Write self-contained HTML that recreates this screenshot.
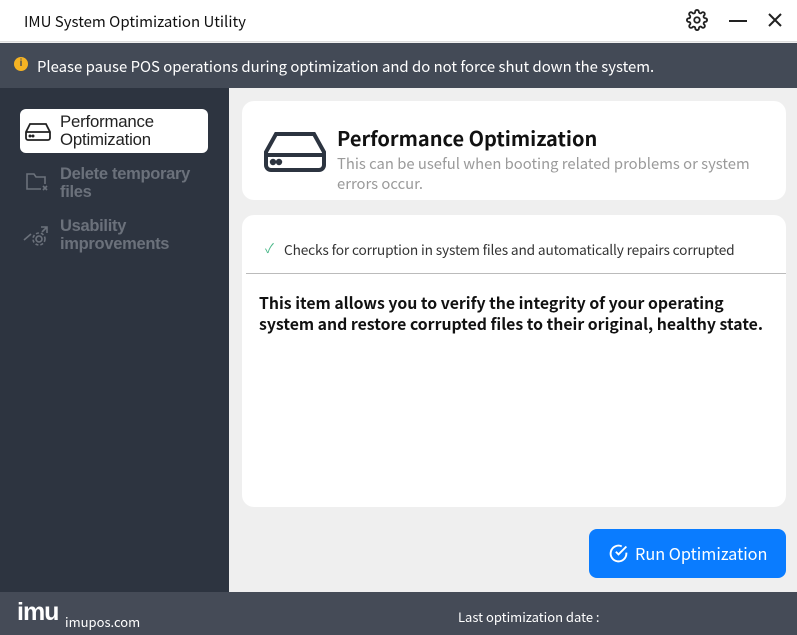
<!DOCTYPE html>
<html><head><meta charset="utf-8"><style>
*{margin:0;padding:0;box-sizing:border-box}
body{width:797px;height:635px;overflow:hidden;font-family:"Liberation Sans","Noto Sans CJK KR",sans-serif;background:#efefef;position:relative}
.abs{position:absolute}
.kr{font-family:"Noto Sans CJK KR","Liberation Sans",sans-serif}
</style></head><body>
<div class="abs" style="left:0;top:0;width:797px;height:42px;background:#fff;border-bottom:1px solid #ddd"></div>
<div class="abs kr" style="left:24px;top:11px;font-size:15px;color:#111">IMU System Optimization Utility</div>
<svg class="abs" style="left:686px;top:9px" width="22" height="22" viewBox="0 0 24 24" fill="none" stroke="#222" stroke-width="2"><circle cx="12" cy="12" r="3"/><path d="M19.4 15a1.7 1.7 0 0 0 .3 1.8l.1.1a2 2 0 1 1-2.8 2.8l-.1-.1a1.7 1.7 0 0 0-1.8-.3 1.7 1.7 0 0 0-1 1.5V21a2 2 0 1 1-4 0v-.1a1.7 1.7 0 0 0-1.1-1.5 1.7 1.7 0 0 0-1.8.3l-.1.1a2 2 0 1 1-2.8-2.8l.1-.1a1.7 1.7 0 0 0 .3-1.8 1.7 1.7 0 0 0-1.5-1H3a2 2 0 1 1 0-4h.1a1.7 1.7 0 0 0 1.5-1.1 1.7 1.7 0 0 0-.3-1.8l-.1-.1a2 2 0 1 1 2.8-2.8l.1.1a1.7 1.7 0 0 0 1.8.3H9a1.7 1.7 0 0 0 1-1.5V3a2 2 0 1 1 4 0v.1a1.7 1.7 0 0 0 1 1.5 1.7 1.7 0 0 0 1.8-.3l.1-.1a2 2 0 1 1 2.8 2.8l-.1.1a1.7 1.7 0 0 0-.3 1.8V9a1.7 1.7 0 0 0 1.5 1H21a2 2 0 1 1 0 4h-.1a1.7 1.7 0 0 0-1.5 1z"/></svg>
<div class="abs" style="left:729px;top:20px;width:18px;height:2px;background:#222"></div>
<svg class="abs" style="left:767px;top:12px" width="16" height="16" viewBox="0 0 16 16" stroke="#222" stroke-width="2"><path d="M2 2L14 14M14 2L2 14"/></svg>
<div class="abs" style="left:0;top:43px;width:797px;height:45px;background:#434a56"></div>
<div class="abs" style="left:14px;top:57px;width:14px;height:14px;border-radius:50%;background:#f5b323;color:#434a56;font-size:10px;font-weight:bold;text-align:center;line-height:14px">i</div>
<div class="abs kr" style="left:37px;top:57px;font-size:14.9px;color:#fff;line-height:20px">Please pause POS operations during optimization and do not force shut down the system.</div>
<div class="abs" style="left:0;top:88px;width:229px;height:504px;background:#2d3440"></div>
<div class="abs" style="left:20px;top:109px;width:188px;height:44px;background:#fff;border-radius:6px"></div>
<svg class="abs" style="left:24px;top:122px" width="28" height="20" viewBox="0 0 28 20" fill="none" stroke="#222" stroke-width="1.8"><path d="M6 2h16l4 8v6a2 2 0 0 1-2 2H4a2 2 0 0 1-2-2v-6z M2 10h24"/><circle cx="6" cy="14" r=".6" fill="#222"/><circle cx="9" cy="14" r=".6" fill="#222"/></svg>
<div class="abs" style="left:60px;top:113px;font-size:16.8px;line-height:18px;color:#222;letter-spacing:-0.2px">Performance<br>Optimization</div>
<svg class="abs" style="left:25px;top:171px" width="26" height="22" viewBox="0 0 26 22" fill="none" stroke="#6b717b" stroke-width="1.6"><path d="M16 18H2V3h7l2 3h9v7"/><path d="M18 15l4 4M22 15l-4 4"/></svg>
<div class="abs" style="left:60px;top:165px;font-size:16.5px;line-height:18px;color:#6b717b;font-weight:bold;letter-spacing:-0.3px">Delete temporary<br>files</div>
<svg class="abs" style="left:23px;top:224px" width="28" height="24" viewBox="0 0 28 24" fill="none" stroke="#6b717b" stroke-width="1.6"><path d="M1 16l7-6M18 3h6v6M24 3l-5 5"/><circle cx="16" cy="15" r="3"/><circle cx="16" cy="15" r="6" stroke-dasharray="3 2"/></svg>
<div class="abs" style="left:60px;top:217px;font-size:16.5px;line-height:18px;color:#6b717b;font-weight:bold;letter-spacing:-0.3px">Usability<br>improvements</div>
<div class="abs" style="left:242px;top:101px;width:544px;height:99px;background:#fff;border-radius:12px"></div>
<svg class="abs" style="left:262px;top:131px" width="66" height="42" viewBox="0 0 66 42" fill="none" stroke="#2c3440" stroke-width="4"><path d="M14 3h38l10 18v13a5 5 0 0 1-5 5H9a5 5 0 0 1-5-5V21z M4 24h58"/><circle cx="11" cy="31" r="1.2" fill="#2c3440"/><circle cx="17" cy="31" r="1.2" fill="#2c3440"/></svg>
<div class="abs kr" style="left:337px;top:124px;font-size:20px;font-weight:bold;color:#111;line-height:28px">Performance Optimization</div>
<div class="abs kr" style="left:337px;top:154px;font-size:14.8px;color:#9a9a9a;line-height:20px;width:440px">This can be useful when booting related problems or system errors occur.</div>
<div class="abs" style="left:242px;top:215px;width:544px;height:292px;background:#fff;border-radius:12px"></div>
<div class="abs" style="left:265px;top:238px;font-size:13px;color:#4cb88a">✓</div>
<div class="abs kr" style="left:284px;top:239px;font-size:13.7px;color:#333;line-height:20px;letter-spacing:-0.15px">Checks for corruption in system files and automatically repairs corrupted</div>
<div class="abs" style="left:246px;top:273px;width:540px;height:1px;background:#bbb"></div>
<div class="abs kr" style="left:259px;top:292px;font-size:15.8px;font-weight:bold;color:#111;line-height:21px;width:520px">This item allows you to verify the integrity of your operating system and restore corrupted files to their original, healthy state.</div>
<div class="abs" style="left:589px;top:529px;width:197px;height:49px;background:#0a7cff;border-radius:8px"></div>
<svg class="abs" style="left:608px;top:543px" width="21" height="21" viewBox="0 0 24 24" fill="none" stroke="#fff" stroke-width="2.2"><path d="M21 11v1a9 9 0 1 1-5.3-8.2"/><path d="M21 4L12 13l-3-3"/></svg>
<div class="abs kr" style="left:635px;top:541px;font-size:16.3px;color:#fff;line-height:24px">Run Optimization</div>
<div class="abs" style="left:0;top:592px;width:797px;height:43px;background:#454b57"></div>
<div class="abs" style="left:17px;top:598px;font-size:25px;font-weight:bold;color:#fff;letter-spacing:-1px">imu</div>
<div class="abs kr" style="left:65px;top:612px;font-size:13px;color:#fff">imupos.com</div>
<div class="abs kr" style="left:458px;top:607px;font-size:13px;color:#fff">Last optimization date :</div>
</body></html>
